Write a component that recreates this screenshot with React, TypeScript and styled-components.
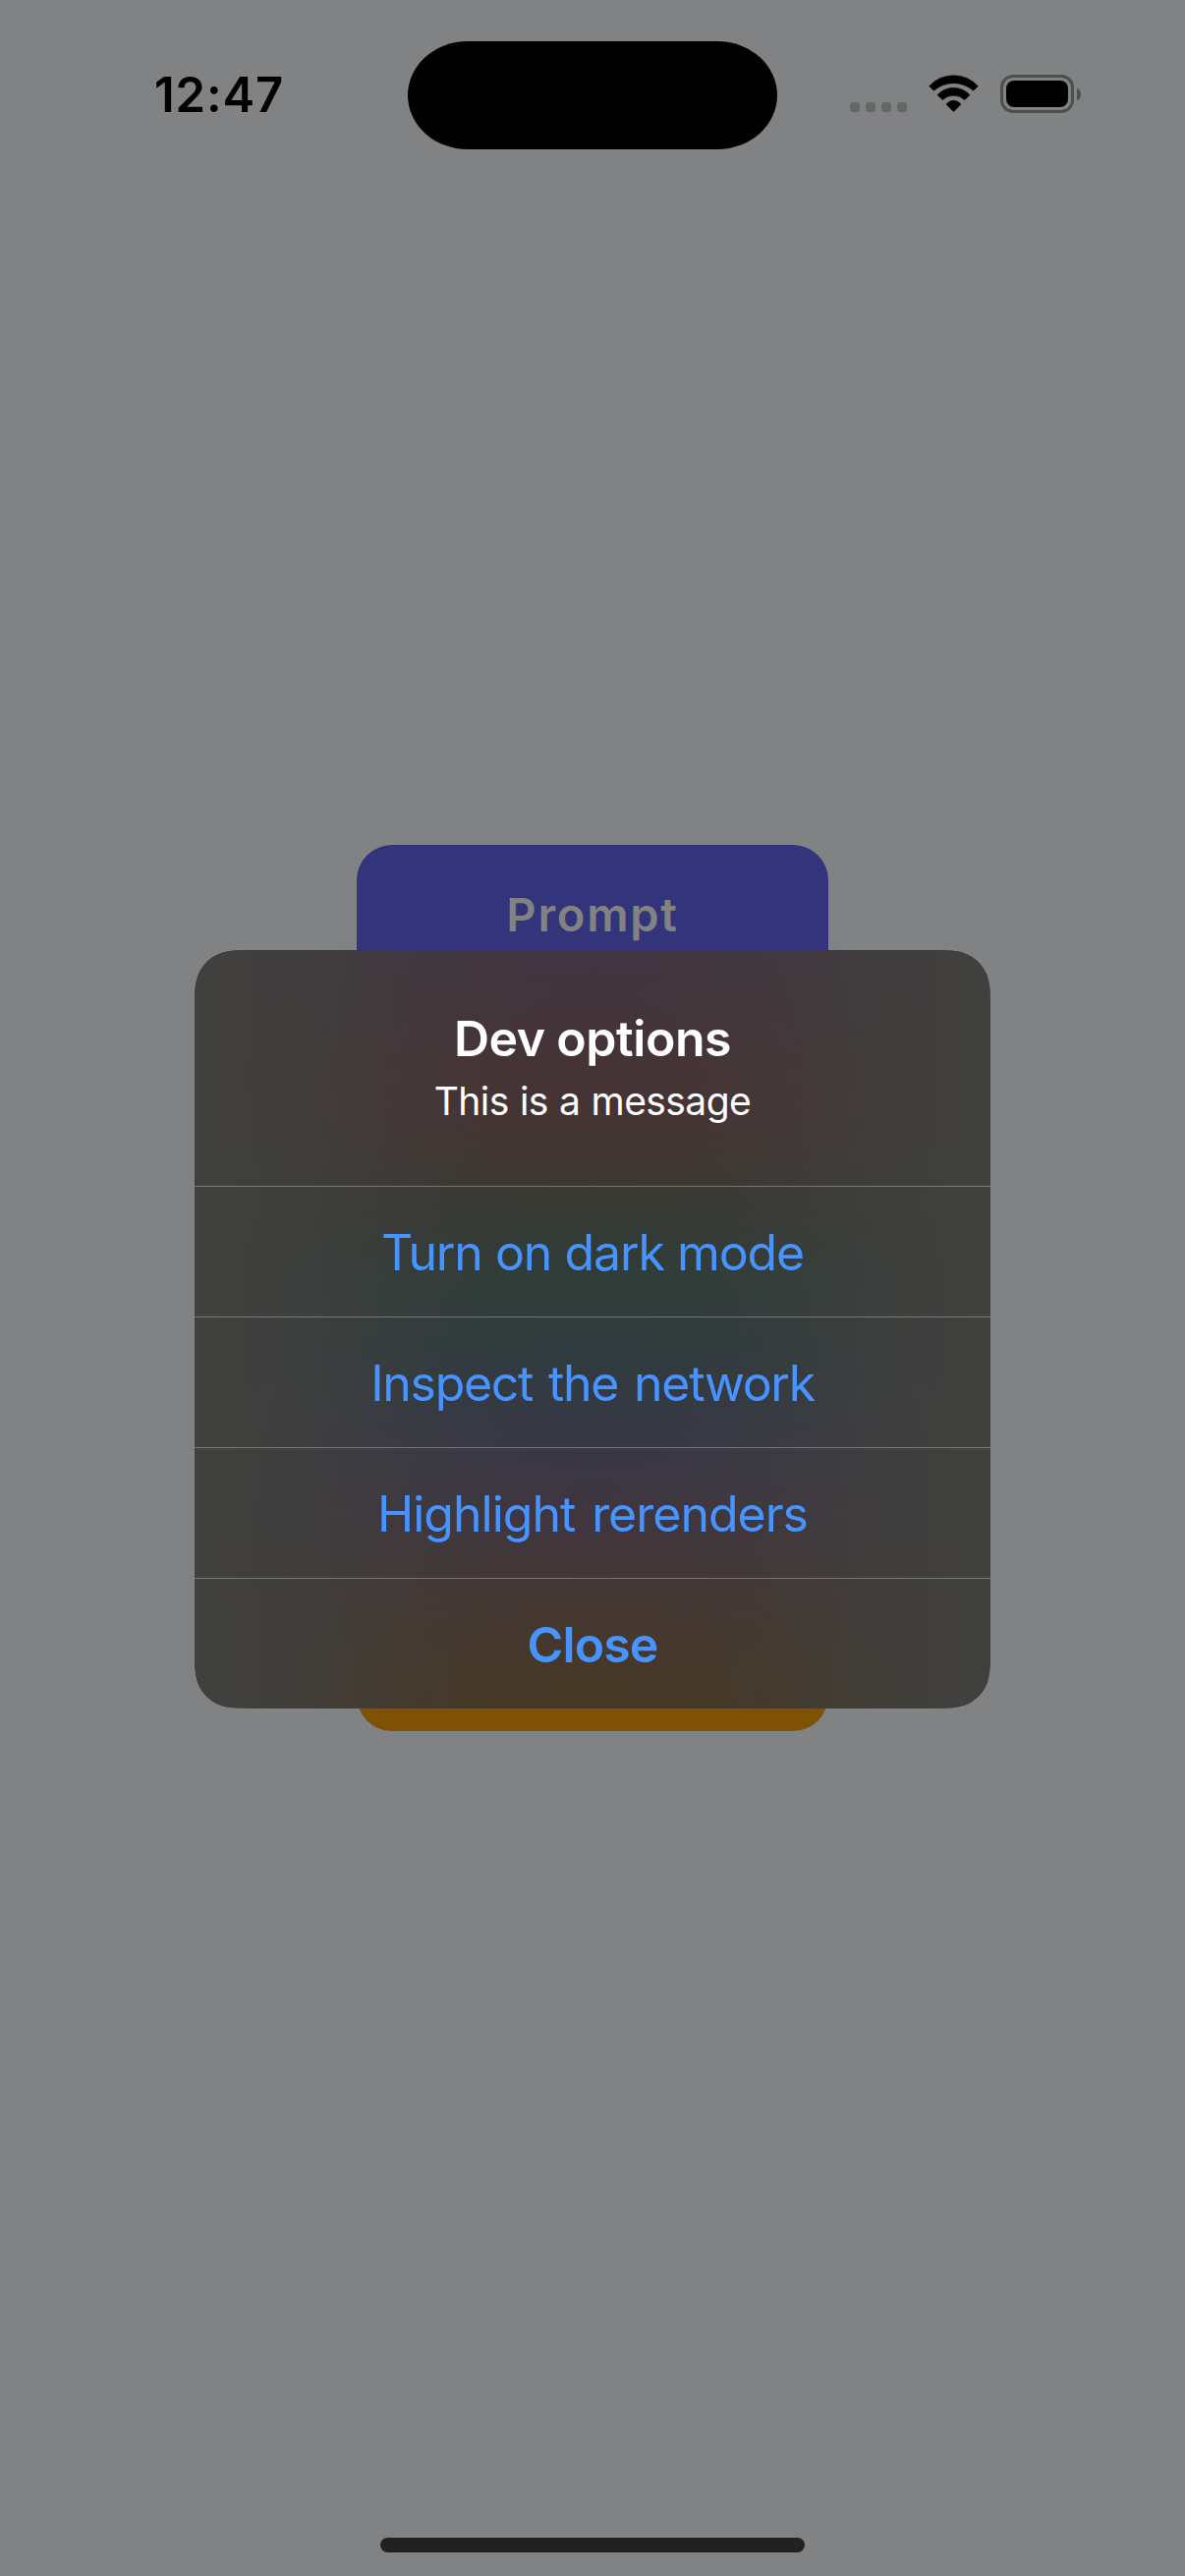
import React from "react";
import styled, { createGlobalStyle } from "styled-components";

const GlobalStyle = createGlobalStyle`
  html, body { margin: 0; padding: 0; background: #818283; }
  * { box-sizing: border-box; }
`;

const Screen = styled.div`
  position: relative;
  display: flex;
  flex-direction: column;
  width: 1206px;
  height: 2622px;
  overflow: hidden;
  background: #818283;
  font-family: Inter, "Liberation Sans", sans-serif;
`;

const StatusBar = styled.header`
  display: grid;
  grid-template-columns: 1fr 376px 1fr;
  align-items: center;
  height: 110px;
  margin-top: 42px;
`;

const Clock = styled.time`
  padding: 0 0 1px 157px;
  font-size: 49px;
  font-weight: 600;
  line-height: 59px;
  letter-spacing: 0.87px;
  color: #000;
`;

const Island = styled.div`
  height: 110px;
  border-radius: 61px / 55px;
  background: #000;
`;

const Indicators = styled.div`
  display: flex;
  align-items: flex-end;
  height: 39px;
  margin-bottom: 3px;
  padding-left: 74px;
`;

const Cellular = styled.div`
  display: flex;
  gap: 6px;
  width: 58px;
  margin: 0 22px 1px 0;
`;

const Dot = styled.span`
  width: 10px;
  height: 10px;
  border-radius: 3.5px;
  background: #656667;
`;

const WifiIcon = styled.svg`
  width: 51px;
  height: 38px;
  margin-bottom: 1px;
`;

const Battery = styled.div`
  display: flex;
  align-items: center;
  gap: 3px;
  margin-left: 22px;
`;

const BatteryShell = styled.div`
  width: 75px;
  height: 39px;
  padding: 3px;
  border: 3px solid #4d4e4e;
  border-radius: 13px;
`;

const BatteryLevel = styled.div`
  height: 100%;
  border-radius: 8px;
  background: #000;
`;

const BatteryTip = styled.div`
  width: 4px;
  height: 12px;
  border-radius: 0 4px 4px 0 / 0 6px 6px 0;
  background: #4d4e4e;
`;

const Menu = styled.main`
  display: flex;
  flex: 1;
  flex-direction: column;
  align-items: center;
  gap: 48px;
  padding-top: 708px;
`;

const MenuButton = styled.button<{ $color: string }>`
  flex: none;
  width: 480px;
  height: 142px;
  padding: 0 0 1px;
  border: 0;
  border-radius: 36px;
  background: ${(p) => p.$color};
  color: #828282;
  font-family: inherit;
  font-size: 47px;
  font-weight: 600;
  letter-spacing: 1.76px;
`;

const HomeIndicator = styled.div`
  width: 432px;
  height: 15px;
  margin: 0 auto 24px;
  border-radius: 8px;
  background: #212121;
`;

const Overlay = styled.div`
  position: absolute;
  inset: 0;
  display: flex;
  align-items: center;
  justify-content: center;
  padding-top: 84px;
`;

/* Vibrancy: the menu colours run down the middle and fade out to both sides. */
const Dialog = styled.section`
  display: flex;
  flex-direction: column;
  width: 810px;
  height: 772px;
  background:
    linear-gradient(
      to right,
      rgb(64, 64, 62) 0%,
      rgba(64, 64, 62, 0.96) 6%,
      rgba(64, 64, 62, 0.81) 13%,
      rgba(64, 64, 62, 0.54) 20%,
      rgba(64, 64, 62, 0.28) 28%,
      rgba(64, 64, 62, 0.08) 38%,
      rgba(64, 64, 62, 0) 50%,
      rgba(64, 64, 62, 0.08) 62%,
      rgba(64, 64, 62, 0.28) 72%,
      rgba(64, 64, 62, 0.54) 80%,
      rgba(64, 64, 62, 0.81) 87%,
      rgba(64, 64, 62, 0.96) 94%,
      rgb(64, 64, 62) 100%
    ),
    linear-gradient(
      to bottom,
      #413541 0px,
      #43343a 60px,
      #463335 130px,
      #443433 175px,
      #403632 210px,
      #3a3832 248px,
      #333b36 295px,
      #2f3d39 350px,
      #2f3b3e 410px,
      #343944 470px,
      #3a3744 520px,
      #3f3640 575px,
      #433636 635px,
      #45372f 685px,
      #463829 730px,
      #463825 772px
    );
  clip-path: path("M0 64.2C0 45.7 0 36.5 2.75 28.1L3.15 26.5C7.1 15.7 15.7 7.1 26.5 3.15C36.5 0 45.7 0 64.2 0H745.8C764.3 0 773.5 0 783.5 3.15C794.3 7.1 802.9 15.7 806.85 26.5C810 36.5 810 45.7 810 64.2V707.8C810 726.3 810 735.5 806.85 745.5C802.9 756.3 794.3 764.9 783.5 768.85C773.5 772 764.3 772 745.8 772H64.2C45.7 772 36.5 772 26.5 768.85C15.7 764.9 7.1 756.3 3.15 745.5C0 735.5 0 726.3 0 707.8Z");
`;

const DialogHeader = styled.div`
  display: flex;
  flex-direction: column;
  align-items: center;
  height: 240px;
  padding-top: 60px;
  color: #fff;
`;

const Title = styled.h1`
  margin: 0;
  font-size: 50px;
  font-weight: 600;
  line-height: 60px;
  letter-spacing: -0.45px;
  word-spacing: -0.5px;
`;

const Message = styled.p`
  margin: 10px 0 0;
  font-size: 39px;
  line-height: 48px;
  letter-spacing: -0.57px;
  word-spacing: 0.8px;
`;

const Action = styled.button<{ $bold?: boolean; $tracking: number; $wordGap?: number }>`
  height: 133px;
  padding: 2px 0 0;
  border: 0;
  border-top: 1px solid rgba(255, 255, 255, 0.3);
  background: none;
  color: #4793ff;
  font-family: inherit;
  font-size: 50px;
  font-weight: ${(p) => (p.$bold ? 600 : 400)};
  letter-spacing: ${(p) => p.$tracking}px;
  word-spacing: ${(p) => p.$wordGap ?? 0}px;
`;

const actions = [
  { label: "Turn on dark mode", tracking: -1.15, wordGap: 0.4 },
  { label: "Inspect the network", tracking: -1.3, wordGap: 3.1 },
  { label: "Highlight rerenders", tracking: -1, wordGap: 3.7 },
  { label: "Close", tracking: -0.88, bold: true },
];

const coveredButtons = ["#802018", "#0f6030", "#442c78", "#7f5104"];

export default function App() {
  return (
    <Screen>
      <GlobalStyle />
      <StatusBar>
        <Clock>12:47</Clock>
        <Island />
        <Indicators>
          <Cellular>
            <Dot />
            <Dot />
            <Dot />
            <Dot />
          </Cellular>
          <WifiIcon viewBox="-1 -2 153 114" aria-hidden="true">
            <g stroke="#000" strokeWidth="1.5" strokeLinejoin="round">
              <path d="M1 33A100.6 100.6 0 0 1 150 33L136 47A91 91 0 0 0 15 47Z" />
              <path d="M26 60A66.7 66.7 0 0 1 125 60L109 75A50 50 0 0 0 42 75Z" />
              <path d="M53 89A27 27 0 0 1 98 89L75.5 111Z" />
            </g>
          </WifiIcon>
          <Battery>
            <BatteryShell>
              <BatteryLevel />
            </BatteryShell>
            <BatteryTip />
          </Battery>
        </Indicators>
      </StatusBar>
      <Menu>
        <MenuButton $color="#33347b">Prompt</MenuButton>
        {coveredButtons.map((color) => (
          <MenuButton key={color} $color={color} tabIndex={-1} />
        ))}
      </Menu>
      <HomeIndicator />
      <Overlay>
        <Dialog role="dialog">
          <DialogHeader>
            <Title>Dev options</Title>
            <Message>This is a message</Message>
          </DialogHeader>
          {actions.map((a) => (
            <Action key={a.label} $bold={a.bold} $tracking={a.tracking} $wordGap={a.wordGap}>
              {a.label}
            </Action>
          ))}
        </Dialog>
      </Overlay>
    </Screen>
  );
}
